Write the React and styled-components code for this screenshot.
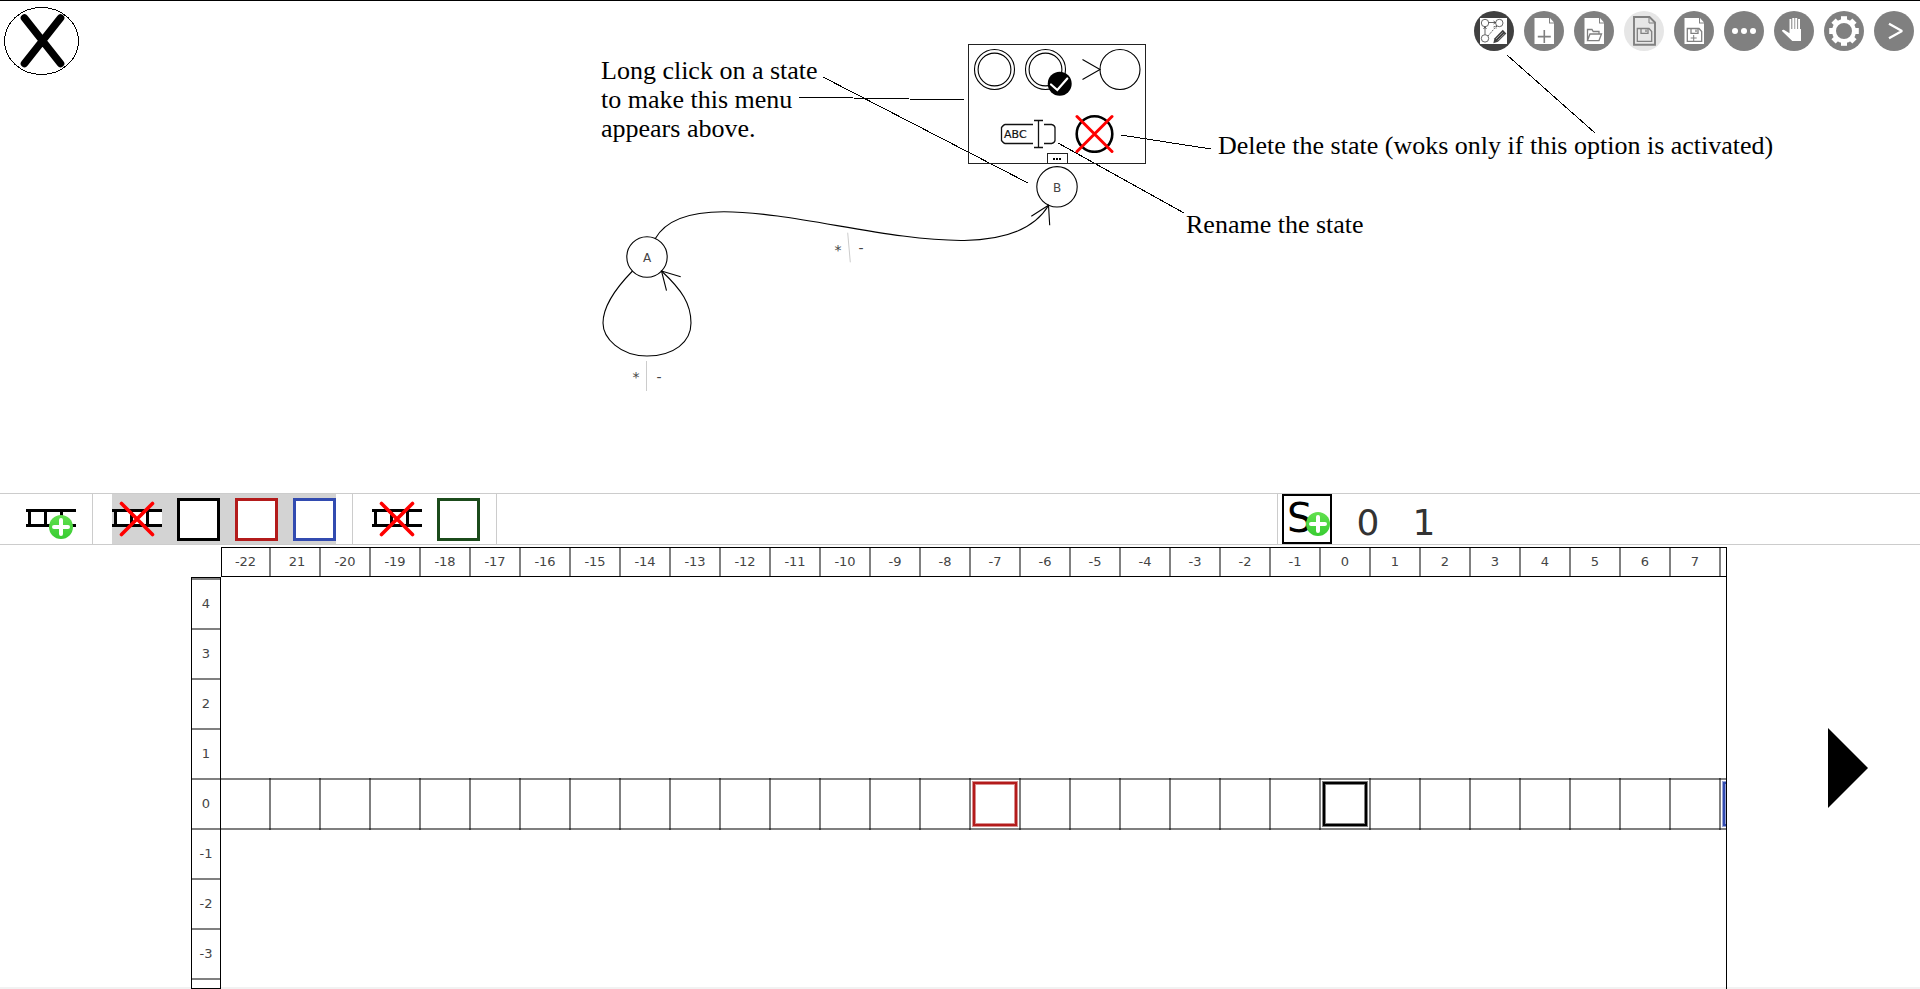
import React from "react";
import styled, { createGlobalStyle } from "styled-components";

const GlobalStyle = createGlobalStyle`
  *, *::before, *::after { box-sizing: border-box; }
  body {
    margin: 0;
    background: #fff;
    color: #333;
    font-family: "DejaVu Sans", Verdana, sans-serif;
    font-size: 13px;
  }
  button {
    padding: 0;
    border: 0;
    background: none;
    color: inherit;
    font: inherit;
    cursor: pointer;
  }
  svg { display: block; }
`;

const Page = styled.div`
  display: grid;
  grid-template-rows: minmax(400px, 492fr) auto minmax(0, 442fr);
  height: 100vh;
  min-height: 800px;
  border-top: 1px solid #000;
  border-bottom: 2px solid #f2f2f2;
`;

/* ---------- automaton editor ---------- */

const Editor = styled.main`
  position: relative;
  overflow: hidden;
`;

const TopBar = styled.header`
  display: flex;
  justify-content: space-between;
  align-items: flex-start;
  padding: 6px 6px 0 3px;
`;

const Tools = styled.nav`
  display: flex;
  gap: 10px;
  padding-top: 4px;
`;

const toolColors = { active: "#404040", normal: "#808080", disabled: "#e6e6e6" };

const ToolButton = styled.button`
  width: 40px;
  height: 40px;
  border-radius: 50%;
  background: ${(p) => toolColors[p.$tone || "normal"]};
`;

const Diagram = styled.svg`
  position: absolute;
  top: -1px;
  left: 0;
  width: 100%;
  height: 100%;
  overflow: visible;
  pointer-events: none;
`;

const Note = styled.p`
  position: absolute;
  left: ${(p) => p.$x}px;
  top: ${(p) => p.$y}px;
  margin: 0;
  color: #000;
  font-family: "Liberation Serif", "Times New Roman", serif;
  font-size: 26px;
  line-height: 29px;
  white-space: pre;
`;

const StateMenu = styled.div`
  position: absolute;
  left: 968px;
  top: 43px;
  display: flex;
  flex-direction: column;
  gap: 18px;
  width: 178px;
  height: 120px;
  border: 1px solid #222;
  padding: 3px 4px 0 4px;
`;

const MenuRow = styled.div`
  display: flex;
  justify-content: ${(p) => (p.$centered ? "center" : "flex-start")};
  gap: ${(p) => (p.$centered ? 18 : 5)}px;
`;

const MoreTab = styled.button`
  align-self: center;
  display: flex;
  justify-content: center;
  align-items: center;
  gap: 1px;
  width: 21px;
  height: 10px;
  margin-top: -18px;
  border: 1px solid #222;
  border-bottom: 0;
`;

const Dot = styled.span`
  width: 2px;
  height: 2px;
  background: #000;
`;

/* ---------- middle toolbar ---------- */

const Bar = styled.div`
  display: grid;
  grid-template-columns: 1277fr 643fr;
  height: 52px;
  border: solid #ccc;
  border-width: 1px 0;
`;

const BarSide = styled.div`
  display: flex;
  ${(p) => p.$divided && "border-left: 1px solid #ccc; padding-left: 4px;"}
`;

const TapeGroup = styled.div`
  display: flex;
  padding: 0 16px 0 ${(p) => (p.$first ? 26 : 19)}px;
  border-right: 1px solid #ccc;
`;

const TapeItems = styled.div`
  display: flex;
  align-items: center;
  gap: 15px;
  background: ${(p) => (p.$selected ? "#d3d3d3" : "transparent")};
`;

const HeadButton = styled.button`
  width: 43px;
  height: 43px;
  border: 3px solid ${(p) => p.$color};
  background: #fff;
`;

const AddSymbol = styled.button`
  width: 50px;
  height: 50px;
  margin-right: 8px;
  box-shadow: inset 0 0 0 2px #000;
`;

const SymbolButton = styled.button`
  width: 56px;
  padding-top: 7px;
  font-size: 36px;
  line-height: 43px;
`;

/* ---------- tape view ---------- */

const TapeArea = styled.section`
  display: grid;
  grid-template-columns: 191fr 1536fr 193fr;
  min-height: 0;
  margin-bottom: -2px;
  padding-top: 2px;
`;

const TapeGrid = styled.div`
  grid-column: 2;
  display: grid;
  grid-template: 30px minmax(0, 1fr) / 30px minmax(0, 1fr);
  min-height: 0;
  color: #444;
`;

const ColumnHeader = styled.div`
  grid-column: 2;
  display: flex;
  border: 1px solid #000;
  overflow: hidden;
`;

const ColumnLabel = styled.div`
  flex: none;
  width: 50px;
  border-right: 2px solid #808080;
  line-height: 28px;
  text-align: center;
  white-space: pre;

  &:first-child { width: 49px; }
`;

const RowHeader = styled.div`
  border: 1px solid #000;
  background: #fff;
  overflow: hidden;
`;

const RowLabel = styled.div`
  height: 50px;
  border-top: 2px solid #808080;
  line-height: 48px;
  text-align: center;
`;

const TapeBody = styled.div`
  padding-top: 1px;
  border-right: 1px solid #000;
  overflow: hidden;
`;

const EmptyRow = styled.div`
  height: 50px;
`;

const TapeRow = styled.div`
  display: flex;
  height: 52px;
  border: solid rgba(0, 0, 0, 0.5);
  border-width: 2px 0;
`;

const Cell = styled.div`
  flex: none;
  display: flex;
  justify-content: center;
  align-items: center;
  width: 50px;
  height: 52px;
  margin-top: -2px;
  border-right: 2px solid rgba(0, 0, 0, 0.5);
`;

const Head = styled.div`
  flex: none;
  width: 44px;
  height: 44px;
  border: 2px solid ${(p) => p.$color};
  box-shadow: 0 0 0 1px ${(p) => p.$color}80, inset 0 0 0 1px ${(p) => p.$color}80;
`;

const PlaySide = styled.div`
  display: flex;
  justify-content: flex-end;
  align-items: center;
  padding-right: 52px;
`;

/* ---------- drawings ---------- */

const CloseIcon = () => (
  <svg width="77" height="70" viewBox="0 0 77 70">
    <ellipse cx="38.5" cy="34" rx="37" ry="33.5" fill="none" stroke="#000" shapeRendering="crispEdges" />
    <path d="M21.5 11 57.5 56.5M57.5 11 21.5 56.5" stroke="#000" strokeWidth="7.6" strokeLinecap="round" />
  </svg>
);

const ToolIcon = ({ children }) => (
  <svg width="40" height="40" viewBox="0 0 40 40" fill="none">{children}</svg>
);

const Sheet = () => (
  <>
    <path d="M10.5 7H25V12.5H30V33H10.5Z" fill="#fff" />
    <path d="M26 7 30 11.5H26Z" fill="#fff" />
  </>
);

const Floppy = ({ plus }) => (
  <g stroke="#808080" strokeWidth="1.3">
    <path d="M13.3 17.5H25L27.7 20.5V30.3H13.3Z" />
    <path d="M17 17.5V22.3H24V17.5M22 18.5V21" />
    {plus && <path d="M19.7 24V30M16.7 27H22.7" strokeWidth="1" />}
  </g>
);

const EditIcon = () => (
  <ToolIcon>
    <rect x="6" y="7" width="27" height="26" fill="#fff" />
    <g stroke="#404040" strokeWidth="0.8">
      <circle cx="11" cy="12" r="3.7" />
      <circle cx="25.3" cy="12" r="3.7" />
      <circle cx="11" cy="27.4" r="3.7" />
      <path d="M11 23.5V16M9.5 18 11 15.8 12.5 18M14.8 11.5H21.5M19.5 10 21.6 11.5 19.5 13" />
      <path d="M14 25 22.5 15M19.5 16 22.6 14.8 22 18" strokeDasharray="2 1" />
    </g>
    <path d="M19.3 32.3 20.5 27.2 28.8 18.8 32.3 22.4 24 30.8Z" fill="#404040" />
    <path d="M22 28 28.8 21.3M23.8 29.4 30.4 22.8" stroke="#fff" strokeWidth="0.5" />
  </ToolIcon>
);

const NewIcon = () => (
  <ToolIcon>
    <Sheet />
    <path d="M20.3 19V32M13.8 25.6H26.8" stroke="#808080" strokeWidth="1.6" />
  </ToolIcon>
);

const OpenIcon = () => (
  <ToolIcon>
    <Sheet />
    <path d="M13.5 29V18.5H18L19.2 20.5H25V22.8M13.5 29.6 16 23H27.5L25 29.6Z" stroke="#808080" strokeWidth="1.3" />
  </ToolIcon>
);

const SaveIcon = () => (
  <ToolIcon>
    <path d="M10 6H25.5L31 11.5V33.8H10Z" stroke="#808080" strokeWidth="1.9" />
    <path d="M25 6.5V12H31" stroke="#808080" />
    <Floppy />
  </ToolIcon>
);

const SaveAsIcon = () => (
  <ToolIcon>
    <Sheet />
    <Floppy plus />
  </ToolIcon>
);

const MoreIcon = () => (
  <ToolIcon>
    <g fill="#fff">
      <circle cx="11" cy="20" r="3" />
      <circle cx="20" cy="20" r="3" />
      <circle cx="29" cy="20" r="3" />
    </g>
  </ToolIcon>
);

const HandIcon = () => (
  <ToolIcon>
    <path
      d="M15.5 8H17.3V18H18.3V7H20.4V18H21.2V7H23.2V18H24.1V8H26V18H27V30H18.3L8.2 20.3C7.6 19.5 8.6 18.4 9.8 18.8L15.5 22.3Z"
      fill="#fff"
    />
  </ToolIcon>
);

const GearIcon = () => (
  <ToolIcon>
    <g fill="#fff">
      {[0, 45, 90, 135, 180, 225, 270, 315].map((a) => (
        <path key={a} d="M17 10V5.2H23V10Z" transform={`rotate(${a} 20 20)`} />
      ))}
    </g>
    <circle cx="20" cy="20" r="10" stroke="#fff" strokeWidth="4" />
  </ToolIcon>
);

const NextIcon = () => (
  <ToolIcon>
    <path d="M15 12.8 28 20 15 27.2" stroke="#fff" strokeWidth="2.4" strokeLinejoin="bevel" />
  </ToolIcon>
);

const PlusBadge = ({ x, y }) => (
  <g>
    <defs>
      <linearGradient id="badge" x1="0" y1="0" x2="0" y2="1">
        <stop offset="0" stopColor="#62e04f" />
        <stop offset="1" stopColor="#38cc32" />
      </linearGradient>
    </defs>
    <circle cx={x} cy={y} r="12" fill="url(#badge)" />
    <path d={`M${x} ${y - 7}V${y + 7}M${x - 7} ${y}H${x + 7}`} stroke="#fff" strokeWidth="4" strokeLinecap="round" />
  </g>
);

const TapeIcon = ({ add, remove }) => (
  <svg width="50" height="50" viewBox="0 0 50 50">
    <rect x="2" y="15" width="48" height="17" fill="#fff" />
    <path d="M0 16.5H50M0 31.5H50M3.5 16V32M19.5 16V32M35.5 16V32" stroke="#000" strokeWidth="3" />
    {add && <PlusBadge x={35} y={33} />}
    {remove && <path d="M9.5 9.5 40.5 40.5M40.5 9.5 9.5 40.5" stroke="#f00" strokeWidth="3.6" strokeLinecap="round" />}
  </svg>
);

const SymbolIcon = () => (
  <svg width="50" height="50" viewBox="0 0 50 50">
    <text x="5" y="38" fontSize="40" fill="#000">S</text>
    <PlusBadge x={36} y={30} />
  </svg>
);

const FinalStateIcon = ({ checked }) => (
  <svg width={checked ? 53 : 46} height="48" fill="none">
    <g stroke="#000" strokeWidth="1.1">
      <circle cx="21.5" cy="21.5" r="20" />
      <circle cx="21.5" cy="21.5" r="16.4" />
    </g>
    {checked && (
      <>
        <circle cx="35.7" cy="35.8" r="12" fill="#000" />
        <path d="M27 36.5 33.3 42 43.3 30.5" stroke="#fff" strokeWidth="2.2" strokeLinecap="round" />
      </>
    )}
  </svg>
);

const InitialStateIcon = () => (
  <svg width="59" height="48" fill="none" stroke="#000" strokeWidth="1.1">
    <path d="M0.5 11.5 18 21.5 0.5 31.5" />
    <circle cx="38" cy="21.5" r="20" />
  </svg>
);

const RenameIcon = () => (
  <svg width="57" height="39" viewBox="0 0 57 39" fill="none">
    <g stroke="#111" strokeWidth="1.3">
      <path d="M33 10.5H5Q4 10.5 1.5 13.5V26.5Q4 29.5 5 29.5H33M44 10.5H51.5Q54.5 11 55 13.5V26.5Q54.5 29 51.5 29.5H44" />
      <path d="M38.5 7V33M34 6.5H43M34 33.5H43" />
    </g>
    <text x="4" y="24" fontSize="11" fill="#111" stroke="#111" strokeWidth="0.2">ABC</text>
  </svg>
);

const DeleteIcon = () => (
  <svg width="39" height="39" viewBox="0 0 39 39" fill="none">
    <circle cx="19.5" cy="20" r="17.8" stroke="#000" strokeWidth="2.6" />
    <path d="M2 2.5 37 37.5M37 2.5 2 37.5" stroke="#f00" strokeWidth="3" strokeLinecap="round" />
  </svg>
);

const PlayIcon = () => (
  <svg width="40" height="80" viewBox="0 0 40 80"><path d="M0 0 40 40 0 80Z" /></svg>
);

/* ---------- page ---------- */

const tools = [
  { label: "Edit automaton", tone: "active", Icon: EditIcon },
  { label: "New", Icon: NewIcon },
  { label: "Open", Icon: OpenIcon },
  { label: "Save", tone: "disabled", Icon: SaveIcon },
  { label: "Save as", Icon: SaveAsIcon },
  { label: "More", Icon: MoreIcon },
  { label: "Move", Icon: HandIcon },
  { label: "Settings", Icon: GearIcon },
  { label: "Next", Icon: NextIcon },
];

const columns = Array.from({ length: 31 }, (_, i) => i - 22);
const rows = [4, 3, 2, 1, 0, -1, -2, -3];
const heads = { "-7": "#b31b1b", 0: "#000000", 8: "#324bb0" };

const columnText = (n) => {
  if (n === -21) return "\u00a021";
  return n === 8 ? "" : n;
};

export default function App() {
  return (
    <>
      <GlobalStyle />
      <Page>
        <Editor>
          <TopBar>
            <button aria-label="Close"><CloseIcon /></button>
            <Tools>
              {tools.map(({ label, tone, Icon }) => (
                <ToolButton key={label} aria-label={label} $tone={tone}><Icon /></ToolButton>
              ))}
            </Tools>
          </TopBar>

          <Diagram fill="none" stroke="#000">
            <g strokeWidth="1.1">
              <path d="M655 239C702 154 989 304 1048.5 205.5" />
              <path d="M1031.3 216.3 1048.5 205.3 1049.7 225.3" />
              <path d="M632.5 271C612 292 603 308 603 323S620 356 647 356 691 342 691 323 682 290 661.5 271" />
              <path d="M680.7 276.7 661.5 271 666.5 290.7" />
              <circle cx="647" cy="257" r="20.2" />
              <circle cx="1057" cy="186.8" r="20.2" />
            </g>
            <path d="M646.5 361V391M847.7 232.7 850.3 262.3" stroke="#ccc" />
            <g stroke="none" fill="#444" fontSize="12" textAnchor="middle">
              <text x="647" y="262">A</text>
              <text x="1057" y="192">B</text>
            </g>
            <g stroke="none" fill="#444" fontSize="14" textAnchor="middle">
              <text x="636" y="382">*</text>
              <text x="659" y="382">-</text>
              <text x="838" y="255">*</text>
              <text x="861" y="253">-</text>
            </g>
            <g shapeRendering="crispEdges">
              <path d="M823 77 1028 183M798 97 964 100M1121 135 1211 149M1058 143 1184 213M1507 55 1595 133" />
            </g>
          </Diagram>

          <StateMenu>
            <MenuRow>
              <button aria-label="Final state"><FinalStateIcon /></button>
              <button aria-label="Accepting state"><FinalStateIcon checked /></button>
              <button aria-label="Initial state"><InitialStateIcon /></button>
            </MenuRow>
            <MenuRow $centered>
              <button aria-label="Rename the state"><RenameIcon /></button>
              <button aria-label="Delete the state"><DeleteIcon /></button>
            </MenuRow>
            <MoreTab aria-label="More options"><Dot /><Dot /><Dot /></MoreTab>
          </StateMenu>

          <Note $x={601} $y={55}>{"Long click on a state\nto make this menu\nappears above."}</Note>
          <Note $x={1218} $y={130}>Delete the state (woks only if this option is activated)</Note>
          <Note $x={1186} $y={209}>Rename the state</Note>
        </Editor>

        <Bar>
          <BarSide>
            <TapeGroup $first>
              <TapeItems>
                <button aria-label="Add tape"><TapeIcon add /></button>
              </TapeItems>
            </TapeGroup>
            <TapeGroup>
              <TapeItems $selected>
                <button aria-label="Remove tape 1"><TapeIcon remove /></button>
                <HeadButton aria-label="Black head" $color="#000" />
                <HeadButton aria-label="Red head" $color="#b31b1b" />
                <HeadButton aria-label="Blue head" $color="#324bb0" />
              </TapeItems>
            </TapeGroup>
            <TapeGroup>
              <TapeItems>
                <button aria-label="Remove tape 2"><TapeIcon remove /></button>
                <HeadButton aria-label="Green head" $color="#1b4b1b" />
              </TapeItems>
            </TapeGroup>
          </BarSide>
          <BarSide $divided>
            <AddSymbol aria-label="Add symbol"><SymbolIcon /></AddSymbol>
            <SymbolButton>0</SymbolButton>
            <SymbolButton>1</SymbolButton>
          </BarSide>
        </Bar>

        <TapeArea>
          <TapeGrid>
            <ColumnHeader>
              {columns.map((n) => <ColumnLabel key={n}>{columnText(n)}</ColumnLabel>)}
            </ColumnHeader>
            <RowHeader>
              {rows.map((n) => <RowLabel key={n}>{n}</RowLabel>)}
              <RowLabel />
            </RowHeader>
            <TapeBody>
              {rows.map((n) =>
                n === 0 ? (
                  <TapeRow key={n}>
                    {columns.map((c) => (
                      <Cell key={c}>{heads[c] && <Head $color={heads[c]} />}</Cell>
                    ))}
                  </TapeRow>
                ) : (
                  <EmptyRow key={n} />
                )
              )}
            </TapeBody>
          </TapeGrid>
          <PlaySide>
            <button aria-label="Run"><PlayIcon /></button>
          </PlaySide>
        </TapeArea>
      </Page>
    </>
  );
}
